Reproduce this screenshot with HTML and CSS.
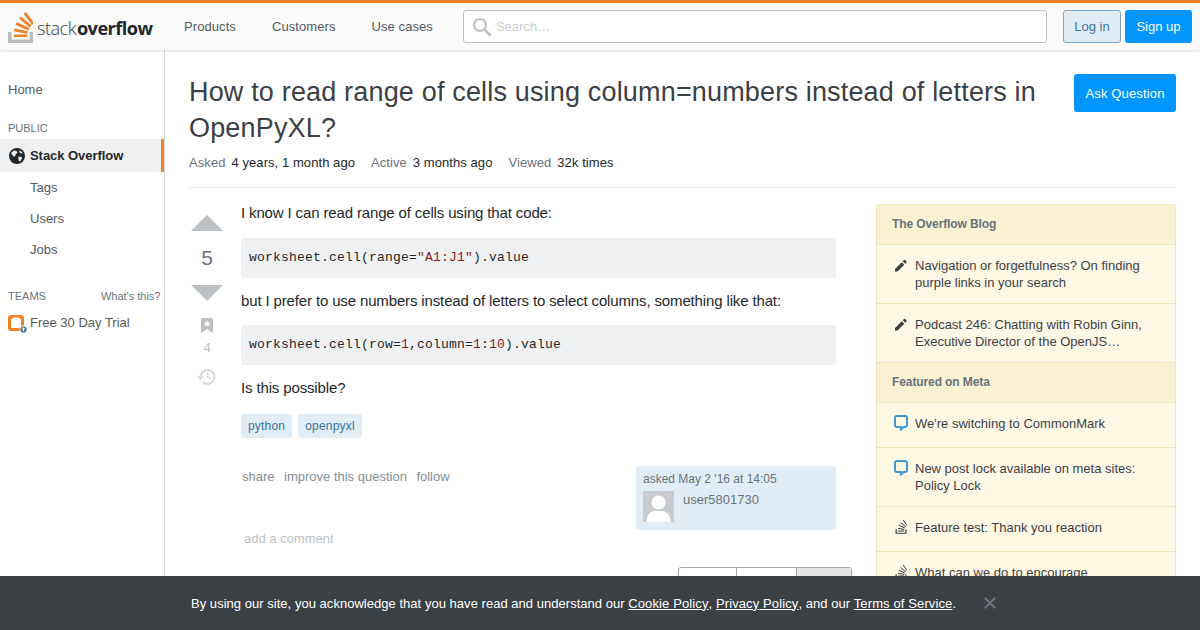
FILE: index.html
```html
<!DOCTYPE html>
<html lang="en">
<head>
<meta charset="utf-8">
<title>How to read range of cells using column=numbers instead of letters in OpenPyXL?</title>
<link rel="stylesheet" href="styles.css">
</head>
<body>
<header class="topbar">
  <a class="logo">
    <svg class="logo-mark" width="25" height="31" viewBox="0 0 30 37"><path d="M26 33v-9h4v13H0V24h4v9h22z" fill="#bcbbbb"/><path d="M21.500 0l-2.700 2 9.900 13.300 2.700-2L21.500 0zM26 18.400L13.300 7.800l2.100-2.500 12.700 10.600-2.100 2.500zM9.100 15.200l15 7 1.400-3-15-7-1.400 3zm14 10.790l.68-2.950-16.100-3.350L7 23l16.100 2.990zM23 30H7v-3h16v3z" fill="#f48024"/></svg>
    <span class="logo-text">stack<b>overflow</b></span>
  </a>
  <nav class="topnav"><a>Products</a><a>Customers</a><a>Use cases</a></nav>
  <div class="search">
    <svg width="20" height="20" viewBox="0 0 20 20"><circle cx="8" cy="8" r="6" fill="none" stroke="#bbc0c4" stroke-width="2"/><path d="M12.500 12.500l6 6" stroke="#bbc0c4" stroke-width="2.600"/></svg>
    <span>Search…</span>
  </div>
  <a class="btn btn-login">Log in</a>
  <a class="btn btn-signup">Sign up</a>
</header>

<div class="page">
  <aside class="sidebar">
    <a class="side-home">Home</a>
    <div class="side-label">PUBLIC</div>
    <a class="side-active">
      <svg width="18" height="18" viewBox="0 0 18 18"><circle cx="9" cy="9" r="8" fill="#242729"/><path d="M3.500 5.500l2.500-2 2.500.5 1 1.800-1.800 1.400-.5 2-1.700.3-2-2.500z M10.500 9.500l3 .5 .8 1.300-2.300 3.300-1.200-.5-.5-2.600z M11.500 3.300l2.500 1.700.4 1.700-1.800-.4-1.300-1.400z" fill="#eff0f1"/></svg>
      <span>Stack Overflow</span>
    </a>
    <a class="side-sub">Tags</a>
    <a class="side-sub">Users</a>
    <a class="side-sub">Jobs</a>
    <div class="side-teams"><span>TEAMS</span><span class="whats">What's this?</span></div>
    <a class="side-trial">
      <svg width="20" height="20" viewBox="0 0 20 20"><rect y="1" width="16" height="16" rx="3" fill="#f48024"/><path d="M3 5h1.500V3.500h7V5H13v9H3z" fill="#fff"/><circle cx="15.500" cy="15.500" r="4" fill="#fff"/><circle cx="15.500" cy="15.500" r="3.200" fill="#5e7d94"/><path d="M14 15h3l-1.500-1.800zM15 15h1v2h-1z" fill="#fff"/></svg>
      <span>Free 30 Day Trial</span>
    </a>
  </aside>

  <main class="main">
    <div class="q-head">
      <h1>How to read range of cells using column=numbers instead of letters in OpenPyXL?</h1>
      <a class="btn btn-ask">Ask Question</a>
    </div>
    <div class="q-meta">
      <span><i>Asked</i>4 years, 1 month ago</span>
      <span><i>Active</i>3 months ago</span>
      <span><i>Viewed</i>32k times</span>
    </div>
    <div class="columns">
      <div class="post">
        <div class="votes">
          <div class="arrow-up"></div>
          <div class="score">5</div>
          <div class="arrow-down"></div>
          <svg class="bookmark" width="12" height="15" viewBox="0 0 12 15"><path d="M0 1.500A1.500 1.500 0 0 1 1.500 0h9A1.500 1.500 0 0 1 12 1.500V15l-6-4-6 4z" fill="#bbc0c4"/><path d="M6 2.500l1 2.100 2.200.3-1.600 1.500.4 2.200-2-1-2 1 .4-2.200-1.600-1.500L5 4.600z" fill="#fff"/></svg>
          <div class="fav">4</div>
          <svg class="history" width="20" height="18" viewBox="0 0 20 18"><path d="M3.500 9a7 7 0 1 1 2.200 5.100" fill="none" stroke="#d6d9dc" stroke-width="2"/><path d="M0 8.500h7L3.500 12.500z M10 4.500h1.500v4.300l3 1.800-.7 1.200-3.800-2.300z" fill="#d6d9dc"/></svg>
        </div>
        <div class="body">
          <p>I know I can read range of cells using that code:</p>
          <pre>worksheet.cell(range=<em>"A1:J1"</em>).value</pre>
          <p>but I prefer to use numbers instead of letters to select columns, something like that:</p>
          <pre>worksheet.cell(row=<em>1</em>,column=<em>1</em>:<em>10</em>).value</pre>
          <p>Is this possible?</p>
          <div class="tags"><a>python</a><a>openpyxl</a></div>
          <div class="post-foot">
            <div class="post-links"><a>share</a><a>improve this question</a><a>follow</a></div>
            <div class="owner">
              <div class="asked">asked May 2 '16 at 14:05</div>
              <div class="user">
                <svg width="31" height="31" viewBox="0 0 31 31"><rect width="31" height="31" fill="#c8ccd0"/><circle cx="15.500" cy="11.500" r="7" fill="#fff"/><path d="M3.500 31c0-6 2.500-10 8-11h8c5.500 1 8 5 8 11z" fill="#fff"/></svg>
                <span>user5801730</span>
              </div>
            </div>
          </div>
          <div class="add-comment">add a comment</div>
          <div class="sort-tabs"><span class="t1"></span><span class="t2"></span><span class="t3"></span></div>
        </div>
      </div>

      <aside class="widget">
        <div class="w-head">The Overflow Blog</div>
        <div class="w-item"><svg class="ic" width="14" height="16" viewBox="0 0 14 16"><path d="M1 12v2.500h2.500l6.800-6.800-2.500-2.500z M8.700 4.300l2.500 2.500 1.300-1.300a.8.800 0 0 0 0-1.100L11.100 3a.8.800 0 0 0-1.100 0z" fill="#3b4045"/></svg><span>Navigation or forgetfulness? On finding purple links in your search</span></div>
        <div class="w-item"><svg class="ic" width="14" height="16" viewBox="0 0 14 16"><path d="M1 12v2.500h2.500l6.800-6.800-2.500-2.500z M8.700 4.300l2.500 2.500 1.300-1.300a.8.800 0 0 0 0-1.100L11.100 3a.8.800 0 0 0-1.100 0z" fill="#3b4045"/></svg><span>Podcast 246: Chatting with Robin Ginn, Executive Director of the OpenJS…</span></div>
        <div class="w-head">Featured on Meta</div>
        <div class="w-item"><svg class="ic" width="14" height="16" viewBox="0 0 14 16"><path d="M3 1h8a2 2 0 0 1 2 2v7a2 2 0 0 1-2 2H9.500L7 14.500V12H3a2 2 0 0 1-2-2V3a2 2 0 0 1 2-2z" fill="none" stroke="#3f96d1" stroke-width="2"/></svg><span>We're switching to CommonMark</span></div>
        <div class="w-item"><svg class="ic" width="14" height="16" viewBox="0 0 14 16"><path d="M3 1h8a2 2 0 0 1 2 2v7a2 2 0 0 1-2 2H9.500L7 14.500V12H3a2 2 0 0 1-2-2V3a2 2 0 0 1 2-2z" fill="none" stroke="#3f96d1" stroke-width="2"/></svg><span>New post lock available on meta sites: Policy Lock</span></div>
        <div class="w-item"><svg class="ic" width="14" height="16" viewBox="-3 -2 36 41"><path d="M26 33v-9h3v12H1V24h3v9h22z" fill="#3b4045"/><path d="M21.500 0l-1.900 1.400 9.900 13.300 1.900-1.400L21.500 0zM26 18.400L13.300 7.800l1.500-1.800 12.700 10.600-1.500 1.800zM9.100 15.200l15 7 1-2.200-15-7-1 2.200zm14 10.790l.5-2.200-16.100-3.350L7 22.700l16.100 3.290zM23 30H7v-2.200h16V30z" fill="#3b4045"/></svg><span>Feature test: Thank you reaction</span></div>
        <div class="w-item"><svg class="ic" width="14" height="16" viewBox="-3 -2 36 41"><path d="M26 33v-9h3v12H1V24h3v9h22z" fill="#3b4045"/><path d="M21.500 0l-1.900 1.400 9.900 13.300 1.900-1.400L21.500 0zM26 18.400L13.300 7.800l1.500-1.800 12.700 10.600-1.500 1.800zM9.100 15.200l15 7 1-2.200-15-7-1 2.200zm14 10.790l.5-2.200-16.100-3.350L7 22.700l16.100 3.290zM23 30H7v-2.200h16V30z" fill="#3b4045"/></svg><span>What can we do to encourage</span></div>
      </aside>
    </div>
  </main>
</div>

<div class="cookie">
  <p>By using our site, you acknowledge that you have read and understand our <a>Cookie Policy</a>, <a>Privacy Policy</a>, and our <a>Terms of Service</a>.</p>
  <svg class="close" width="12" height="12" viewBox="0 0 12 12"><path d="M.8.800l10.400 10.400M11.200.800L.8 11.200" stroke="#6a737c" stroke-width="2"/></svg>
</div>
</body>
</html>
```
FILE: styles.css
```css
* { box-sizing: border-box; }
html, body { margin: 0; height: 630px; overflow: hidden; }
body { background: #fff; color: #242729; font-family: "Liberation Sans", Arial, sans-serif; font-size: 13px; position: relative; }
a { color: inherit; text-decoration: none; }

.topbar { height: 50px; border-top: 3px solid #f48024; background: #fafafb; box-shadow: 0 1px 2px rgba(12,13,14,.1), 0 1px 4px rgba(12,13,14,.05); display: flex; align-items: center; padding: 0 8px; position: relative; z-index: 2; }
.logo { display: flex; align-items: center; width: 158px; height: 100%; flex: none; }
.logo-mark { flex: none; margin-top: 2px; }
.logo-text { font-family: "Open Sans", sans-serif; font-size: 18.200px; letter-spacing: -.55px; color: #3b4045; margin-left: 4px; margin-top: 2px; font-weight: 300; white-space: nowrap; }
.logo-text b { font-weight: 700; color: #242729; margin-left: 1px; }
.topnav { display: flex; gap: 36px; margin-left: 18px; color: #535a60; letter-spacing: .08px; }
.search { width: 584px; height: 33px; margin-left: 30px; border: 1px solid #bbc0c4; border-radius: 3px; background: #fff; display: flex; align-items: center; gap: 4px; padding-left: 8px; color: #c8ccd0; }
.btn { display: flex; align-items: center; justify-content: center; border-radius: 3px; }
.btn-login { width: 58px; height: 33px; margin-left: 16px; background: #e1ecf4; border: 1px solid #7aa7c7; color: #39739d; }
.btn-signup { width: 67px; height: 33px; margin-left: 4px; background: #0095ff; color: #fff; }

.page { display: flex; height: 580px; }
.sidebar { width: 165px; flex: none; border-right: 1px solid #d6d9dc; padding-top: 25px; color: #535a60; }
.side-home { display: block; height: 30px; line-height: 30px; padding-left: 8px; }
.side-label { font-size: 11px; color: #6a737c; margin-top: 16px; padding-left: 8px; line-height: 14px; }
.side-active { display: flex; align-items: center; gap: 4px; height: 33px; margin-top: 4px; padding-left: 8px; background: #eff0f1; border-right: 3px solid #f48024; color: #242729; font-weight: 700; letter-spacing: -.05px; }
.side-sub { display: block; height: 31px; line-height: 31px; padding-left: 30px; }
.side-teams { display: flex; justify-content: space-between; margin-top: 24px; padding: 0 3.500px 0 8px; font-size: 11px; line-height: 14px; color: #6a737c; }
.side-trial { display: flex; gap: 2px; padding-left: 8px; margin-top: 11px; line-height: 18px; }

.main { flex: 1; padding: 24px 24px 0; min-width: 0; }
.q-head { display: flex; justify-content: space-between; align-items: flex-start; }
h1 { margin: 0; width: 860px; font-size: 27px; font-weight: 400; line-height: 36px; color: #3b4045; letter-spacing: .17px; }
.btn-ask { width: 102px; height: 38px; background: #0095ff; color: #fff; border-radius: 3px; letter-spacing: .15px; }
.q-meta { display: flex; gap: 16px; margin-top: 8px; padding-bottom: 16px; border-bottom: 1px solid #e4e6e8; line-height: 17px; letter-spacing: .07px; }
.q-meta i { font-style: normal; color: #6a737c; margin-right: 6px; }

.columns { display: flex; justify-content: space-between; padding-top: 16px; }
.post { width: 647px; display: flex; }
.votes { width: 36px; flex: none; margin-right: 16px; display: flex; flex-direction: column; align-items: center; }
.arrow-up { width: 0; height: 0; border: 16px solid transparent; border-top: 0; border-bottom-color: #bbc0c4; margin-top: 11px; }
.score { font-size: 21px; line-height: 24px; color: #6a737c; margin-top: 15px; }
.arrow-down { width: 0; height: 0; border: 16px solid transparent; border-bottom: 0; border-top-color: #bbc0c4; margin-top: 15px; }
.bookmark { margin-top: 17px; }
.fav { color: #bbc0c4; line-height: 16px; margin-top: 7px; }
.history { margin-top: 12px; }
.body { flex: 1; min-width: 0; position: relative; }
.body p { margin: 0; font-size: 15px; line-height: 19px; color: #242729; letter-spacing: -.14px; }
.body p:first-child { margin: -1px 0 16px; }
pre { margin: 15px 0 13px; width: 595px; height: 40px; padding: 0 8px; background: #eff0f1; border-radius: 3px; font-family: "Liberation Mono", monospace; font-size: 13px; line-height: 39px; color: #242729; letter-spacing: .2px; }
pre em { font-style: normal; color: #8c1c1c; }
.tags { display: flex; gap: 6px; margin-top: 17px; }
.tags a { height: 24px; line-height: 24px; padding: 0 7px; background: #e1ecf4; color: #39739d; font-size: 12px; border-radius: 3px; letter-spacing: .2px; }
.post-foot { display: flex; justify-content: space-between; margin-top: 28px; width: 595px; }
.post-links { display: flex; gap: 9.500px; color: #848d95; padding-left: 1px; padding-top: 3px; }
.owner { width: 200px; height: 64px; background: #e1ecf4; border-radius: 3px; padding: 6px 7px; color: #6a737c; font-size: 12px; }
.asked { line-height: 15px; }
.user { display: flex; gap: 9px; margin-top: 4px; font-size: 13px; line-height: 18px; }
.add-comment { padding-left: 3px; color: #bbc0c4; line-height: 17px; }
.sort-tabs { display: flex; margin: 20px 0 0 437px; width: 174px; height: 30px; border: 1px solid #9fa6ad; border-radius: 3px; }
.sort-tabs span { border-right: 1px solid #9fa6ad; }
.sort-tabs .t1 { width: 58px; }
.sort-tabs .t2 { width: 60px; }
.sort-tabs .t3 { flex: 1; border-right: 0; background: #e4e6e8; }

.widget { width: 300px; flex: none; align-self: flex-start; background: #fff8e5; border: 1px solid #f1e5bc; border-radius: 3px; box-shadow: 0 1px 2px rgba(12,13,14,.05); }
.w-head { height: 40px; line-height: 38px; padding-left: 15px; background: #faf0d2; color: #6a737c; font-size: 12px; font-weight: 700; border-bottom: 1px solid #f1e5bc; letter-spacing: -.1px; }
.w-item { display: flex; gap: 7px; min-height: 45px; padding: 12px 16px 12px; line-height: 17px; color: #3b4045; border-bottom: 1px solid #f1e5bc; }
.ic { flex: none; margin-left: 1px; }
.w-item span { min-width: 0; }

.cookie { position: absolute; left: 0; right: 0; bottom: 0; height: 54px; background: #3b4045; color: #fff; z-index: 3; display: flex; align-items: center; padding-left: 191px; gap: 28px; }
.cookie p { margin: 0; letter-spacing: .03px; }
.cookie a { text-decoration: underline; letter-spacing: .12px; }
```
